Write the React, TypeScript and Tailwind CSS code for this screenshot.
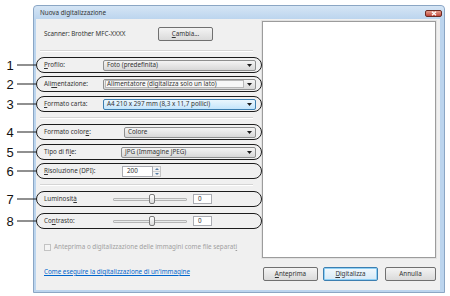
import React from "react";

const Arrow = () => (
  <svg width="5" height="3" viewBox="0 0 5 3" className="shrink-0">
    <path d="M0 0h5L2.5 3z" fill="#1e1e1e" />
  </svg>
);

function Row({ n, className, children }: { n: number; className: string; children: React.ReactNode }) {
  return (
    <div className={`relative h-[16px] rounded-full border-[1.5px] border-[#1c1c1c] flex items-center pl-[7px] pr-[5px] ${className}`}>
      <div className="absolute right-full top-1/2 -translate-y-1/2 flex items-center">
        <span className="w-[10px] text-center text-[13px] leading-none text-[#111] font-['Liberation_Sans',sans-serif]">{n}</span>
        <div className="ml-[2px] w-[20px] h-px bg-[#222]" />
      </div>
      {children}
    </div>
  );
}

function Select({ text }: { text: string }) {
  return (
    <div className="flex-1 h-[11px] rounded-[2px] border border-[#8e8f8f] bg-linear-to-b from-[#f4f4f4] to-[#d8d8d8] flex items-center pl-[3px] pr-[3px] text-[#333]">
      <span className="flex-1 whitespace-nowrap">{text}</span>
      <Arrow />
    </div>
  );
}

function Slider() {
  return (
    <>
      <div className="relative w-[74px] h-[10px] flex items-center">
        <div className="w-full h-[3px] bg-[#e7eaea] border border-[#b5b5b5] rounded-[1px]" />
        <div className="absolute left-[36px] top-[0px] w-[6px] h-[10px] rounded-[2px] border border-[#7c7c7c] bg-linear-to-b from-white to-[#dcdcdc]" />
      </div>
      <div className="ml-[6px] w-[19px] h-[10px] bg-white border border-[#abadb3] flex items-center pl-[4px] text-[#333]">0</div>
    </>
  );
}

function Btn({ children, def, className }: { children: React.ReactNode; def?: boolean; className: string }) {
  return (
    <div
      className={`h-[14px] rounded-[2px] border flex items-center justify-center text-[#333] bg-linear-to-b ${
        def ? "border-[#3c7fb1] from-[#f2f9fd] to-[#d6e9f6] shadow-[inset_0_0_0_1px_#8fd0f5]" : "border-[#707070] from-[#f4f4f4] to-[#dadada]"
      } ${className}`}
    >
      {children}
    </div>
  );
}

function Sep() {
  return <div className="ml-[4px] mr-[9px] h-[2px] border-t border-[#d5d5d5] border-b border-b-white" />;
}

export default function App() {
  return (
    <div className="w-[450px] h-[296px] bg-white overflow-hidden font-['Noto_Sans',sans-serif] text-[6.3px] leading-none">
      <div className="ml-[33px] mt-[5px] w-[412px] h-[288px] border border-[#8ba6c4] rounded-t-[4px] bg-[#bcd5ee] flex flex-col">
        <div className="h-[13px] flex items-start pl-[6px] pr-[2px] bg-linear-to-b from-[#d5e5f5] to-[#bcd5ee] rounded-t-[4px]">
          <span className="mt-[4px] text-[#333]">Nuova digitalizzazione</span>
          <div className="ml-auto mt-[4px] w-[17px] h-[7px] rounded-[2px] border border-[#6b2a22] bg-linear-to-b from-[#e5a08f] to-[#c0443a] flex items-center justify-center">
            <svg width="6" height="5" viewBox="0 0 6 5">
              <path d="M1 0.8L5 4.2M5 0.8L1 4.2" stroke="white" strokeWidth="1.3" />
            </svg>
          </div>
        </div>
        <div className="flex-1 flex ml-[2px] mr-[4px] mb-[2px] bg-[#f0f0f0]">
          <div className="w-[226px] shrink-0 flex flex-col text-[#333]">
            <div className="pt-[8px] pl-[8px] flex items-center">
              <span className="w-[114px]">Scanner: Brother MFC-XXXX</span>
              <Btn className="w-[55px] h-[11px]">
                <span>
                  <u>C</u>ambia...
                </span>
              </Btn>
            </div>
            <div className="mt-[9px]">
              <Sep />
            </div>
            <Row n={1} className="mt-[5px]">
              <span className="w-[59px]">
                <u>P</u>rofilo:
              </span>
              <Select text="Foto (predefinita)" />
            </Row>
            <Row n={2} className="mt-[3px]">
              <span className="w-[59px]">
                Ali<u>m</u>entazione:
              </span>
              <div className="flex-1 h-[11px] rounded-[2px] border border-[#8e8f8f] bg-linear-to-b from-[#f4f4f4] to-[#d8d8d8] flex items-center pl-[1px] pr-[3px]">
                <span className="flex-1 h-[8px] border border-[#b8b8b8] bg-[#f7f7f7] flex items-center pl-[1px] whitespace-nowrap">
                  Alimentatore (digitalizza solo un lato)
                </span>
                <span className="ml-[3px]">
                  <Arrow />
                </span>
              </div>
            </Row>
            <Row n={3} className="mt-[4px]">
              <span className="w-[59px]">
                <u>F</u>ormato carta:
              </span>
              <div className="flex-1 h-[11px] rounded-[2px] border border-[#3c7fb1] bg-linear-to-b from-[#eaf6fd] to-[#c4e5fb] flex items-center pl-[3px] pr-[3px]">
                <span className="flex-1 whitespace-nowrap">A4 210 x 297 mm (8,3 x 11,7 pollici)</span>
                <Arrow />
              </div>
            </Row>
            <div className="mt-[5px]">
              <Sep />
            </div>
            <Row n={4} className="mt-[5px]">
              <span className="w-[80px]">
                Formato color<u>e</u>:
              </span>
              <Select text="Colore" />
            </Row>
            <Row n={5} className="mt-[4px]">
              <span className="w-[77px]">
                Tipo di fi<u>l</u>e:
              </span>
              <Select text="JPG (Immagine JPEG)" />
            </Row>
            <Row n={6} className="mt-[3px]">
              <span className="w-[78px]">
                <u>R</u>isoluzione (DPI):
              </span>
              <div className="w-[31px] h-[11px] bg-white border border-[#abadb3] flex items-center pl-[4px]">200</div>
              <div className="w-[8px] h-[11px] flex flex-col border border-[#c5c5c5] border-l-0 bg-[#f2f2f2]">
                <div className="flex-1 flex items-center justify-center border-b border-[#d0d0d0]">
                  <svg width="4" height="2" viewBox="0 0 4 2">
                    <path d="M0 2h4L2 0z" fill="#5a7fa6" />
                  </svg>
                </div>
                <div className="flex-1 flex items-center justify-center">
                  <svg width="4" height="2" viewBox="0 0 4 2">
                    <path d="M0 0h4L2 2z" fill="#5a7fa6" />
                  </svg>
                </div>
              </div>
            </Row>
            <div className="mt-[5px]">
              <Sep />
            </div>
            <Row n={7} className="mt-[5px]">
              <span className="w-[69px]">
                Luminosit<u>à</u>
              </span>
              <Slider />
            </Row>
            <Row n={8} className="mt-[6px]">
              <span className="w-[69px]">
                Co<u>n</u>trasto:
              </span>
              <Slider />
            </Row>
            <div className="mt-[15px] pl-[8px] flex items-center text-[#a0a0a0]">
              <div className="w-[7px] h-[7px] border border-[#c3c3c3] bg-[#f4f4f4]" />
              <span className="ml-[3px] whitespace-nowrap">
                Anteprima o digitalizzazione delle immagini come file separat<u>i</u>
              </span>
            </div>
            <div className="mt-[18px] pl-[8px]">
              <span className="text-[#0066cc] underline whitespace-nowrap">Come eseguire la digitalizzazione di un'immagine</span>
            </div>
          </div>
          <div className="flex-1 flex flex-col pr-[4px] pt-[2px]">
            <div className="h-[237px] bg-white border border-[#9c9c9c] shadow-[0_0_0_1px_#e2e2e2]" />
            <div className="mt-[9px] pl-[1px] flex">
              <Btn className="w-[55px]">
                <span>
                  <u>A</u>nteprima
                </span>
              </Btn>
              <Btn def className="ml-[5px] w-[55px]">
                <span>
                  <u>D</u>igitalizza
                </span>
              </Btn>
              <Btn className="ml-[7px] w-[51px]">
                <span>Annulla</span>
              </Btn>
            </div>
          </div>
        </div>
      </div>
    </div>
  );
}
